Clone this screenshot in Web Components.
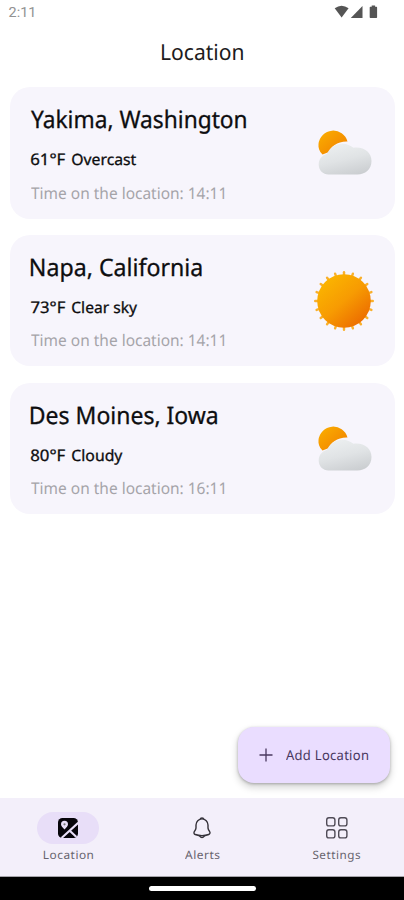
<!DOCTYPE html>
<html lang="en"><head><meta charset="utf-8"><title>Location</title>
<style>html,body{margin:0;background:#fff;overflow:hidden}body{width:404px;height:900px}</style></head><body>
<weather-app></weather-app>
<script>
const FONT='"Noto Sans","Open Sans",sans-serif';
const ctx=document.createElement('canvas').getContext('2d');
// A line of text whose ink spans exactly the requested width.
class FitText extends HTMLElement{
  connectedCallback(){
    const w=+this.getAttribute('w'),s=+this.getAttribute('size'),lh=+this.getAttribute('lh'),ls=+(this.getAttribute('ls')||0);
    const font=this.getAttribute('font')||FONT, t=this.textContent;
    const r=this.attachShadow({mode:'open'});
    // Measured large, so that whole-pixel rounding does not matter.
    ctx.font=`${s*20}px ${font}`;ctx.letterSpacing=ls*20+'px';
    const m=ctx.measureText(t),left=m.actualBoundingBoxLeft/20,ink=left+m.actualBoundingBoxRight/20,k=w/ink;
    r.innerHTML=`<style>:host{display:block;flex:none;width:${w}px;height:${lh}px}
    span{display:inline-block;white-space:nowrap;font:${s}px/${lh}px ${font};letter-spacing:${ls}px;text-rendering:geometricPrecision;transform-origin:0 0;transform:translateX(${left*k}px) scaleX(${k});-webkit-text-stroke:${this.getAttribute('stroke')||0}px currentColor}</style><span><slot></slot></span>`;
  }
}
customElements.define('fit-text',FitText);

const CLOUD=`<svg width="60" height="60" viewBox="314 121 60 60"><defs><linearGradient id="s" x1="0" y1="0" x2="1" y2="1"><stop stop-color="#fbb000"/><stop offset="1" stop-color="#f07d00"/></linearGradient><linearGradient id="c" x1=".3" y1="0" x2=".7" y2="1"><stop stop-color="#eceff0"/><stop offset=".5" stop-color="#e0e3e5"/><stop offset="1" stop-color="#cbced1"/></linearGradient></defs>
<path d="M322.500 155.500C319 152 318.200 148.500 318.500 145A14.800 14.800 0 0 1 347.500 142.500C338 142 330 148 329 153Z" fill="url(#s)"/>
<path d="M328.500 175.500C323 175.500 318.700 171.200 318.700 165.500C318.700 160 322 156.500 327 154.800C330 148.500 335.500 144.700 342.500 144.700C347 144.700 350.500 146.500 353.500 148.800C364 147.500 371.500 153.500 371.500 162C371.500 170.500 365 175.500 357.500 175.500Z" fill="url(#c)"/></svg>`;
const rays=Array.from({length:20},(_,i)=>`<path d="M30 1.200V5" transform="rotate(${i*18} 30 30)"/>`).join('');
const SUN=`<svg width="60" height="60" viewBox="0 0 60 60"><defs><linearGradient id="s" x1=".15" y1=".1" x2=".85" y2=".9"><stop stop-color="#fbb400"/><stop offset=".5" stop-color="#f79b02"/><stop offset="1" stop-color="#ec6c00"/></linearGradient></defs><g stroke="#f9b02c" stroke-width="2.400" stroke-linecap="round">${rays}</g><circle cx="30" cy="30" r="26.800" fill="url(#s)"/></svg>`;

customElements.define('status-bar',class extends HTMLElement{connectedCallback(){
  this.attachShadow({mode:'open'}).innerHTML=`<style>:host{display:flex;justify-content:space-between;height:26px;box-sizing:border-box;padding:3px 26px 0 9px;color:#929292}svg{display:block}</style>
  <fit-text w="24.500" size="14" lh="20" font="Roboto,sans-serif">2:11</fit-text>
  <svg width="44" height="18" viewBox="334 3 44 18" fill="#555"><path d="M334.700 8.300Q341.600 3 348.600 8.300L341.600 17.500Z"/><path d="M362.500 6V18H350.800Z"/><path d="M371.700 5.500h3.400v1.300h1.400q.6 0 .6.700v9.800q0 .7-.7.700h-6q-.7 0-.7-.7V7.500q0-.7.6-.7h1.400Z"/></svg>`}});

customElements.define('app-header',class extends HTMLElement{connectedCallback(){
  this.attachShadow({mode:'open'}).innerHTML=`<style>:host{display:flex;justify-content:center;height:61px;box-sizing:border-box;padding:11px 0 0 1px;color:#1d1b20}</style><fit-text w="81" size="22" lh="30">${this.textContent}</fit-text>`;
}});

customElements.define('location-card',class extends HTMLElement{connectedCallback(){
  const a=n=>this.getAttribute(n);
  this.attachShadow({mode:'open'}).innerHTML=`<style>:host{display:flex;justify-content:space-between;align-items:flex-start;box-sizing:border-box;height:131.500px;border-radius:20px;background:#f7f5fc;padding:17px 21px 0 20.500px;color:#0d0d0f}
  .row{display:flex;gap:7.500px;margin:11px 0 9.500px}.time{color:#a5a4a9}.icon{padding-top:${a('icon')==='sun'?19:16}px}svg{display:block}</style>
  <div><fit-text w="${a('nw')}" size="24" lh="32" stroke=".3">${a('name')}</fit-text>
  <div class="row"><fit-text w="34" size="16" lh="24" stroke=".3">${a('temp')}</fit-text><fit-text w="${a('sw')}" size="15.500" lh="24" stroke=".3">${a('sky')}</fit-text></div>
  <fit-text class="time" w="193" size="16" lh="24">Time on the location: ${a('time')}</fit-text></div><div class="icon">${a('icon')==='sun'?SUN:CLOUD}</div>`}});

customElements.define('add-button',class extends HTMLElement{connectedCallback(){
  this.attachShadow({mode:'open'}).innerHTML=`<style>:host{display:flex;align-items:center;box-sizing:border-box;width:152px;height:55.500px;border-radius:16px;background:#eaddff;padding-left:21px;gap:12.500px;color:#49385f;box-shadow:0 1px 3px rgba(0,0,0,.26),0 4px 7px 1px rgba(0,0,0,.15)}</style>
  <svg width="14" height="14" fill="none" stroke="currentColor" stroke-width="1.300"><path d="M7 .5v13M.5 7h13"/></svg><fit-text w="82" size="13.500" lh="20" ls=".3">${this.textContent}</fit-text>`}});

const ICONS={
 map:`<defs><clipPath id="m"><rect x="2" y="2" width="20" height="20" rx="4.500"/></clipPath></defs><g clip-path="url(#m)"><rect x="2" y="2" width="20" height="20" fill="#07050b"/><path d="M22.500 6.500L5 22.500M13.500 14.500L22 22.500" stroke="#e8def8" stroke-width="2.100"/><path d="M8.500 13.500C6.500 11.500 5 10.200 5 8.300A3.500 3.500 0 0 1 12 8.300C12 10.200 10.500 11.500 8.500 13.500Z" fill="#e8def8"/><circle cx="8.500" cy="8.300" r="1.100" fill="#777"/></g>`,
 bell:`<g fill="none" stroke="#35323a" stroke-width="1.400" stroke-linecap="round" stroke-linejoin="round"><path d="M12 2.900C8.700 2.900 6 5.600 6 8.900V11.800C6 12.400 5.700 13.300 5.400 13.800L4.300 15.700C3.600 16.900 4.100 18.100 5.300 18.500C9.700 20 14.300 20 18.700 18.500C19.900 18.100 20.400 16.800 19.700 15.700L18.600 13.800C18.300 13.300 18 12.400 18 11.800V8.900C18 5.600 15.300 2.900 12 2.900Z"/><path d="M10.600 2.400Q12 1.700 13.400 2.400M9.500 19.800Q12 23.200 14.500 19.800"/></g>`,
 grid:`<g fill="none" stroke="#4f4b56" stroke-width="1.400"><rect x="1.700" y="1.700" width="8.200" height="8.200" rx="2.200"/><rect x="13.700" y="1.700" width="8.200" height="8.200" rx="2.200"/><rect x="1.700" y="13.700" width="8.200" height="8.200" rx="2.200"/><rect x="13.700" y="13.700" width="8.200" height="8.200" rx="2.200"/></g>`};
customElements.define('nav-item',class extends HTMLElement{connectedCallback(){
  this.attachShadow({mode:'open'}).innerHTML=`<style>:host{flex:1;display:flex;flex-direction:column;align-items:center;padding-top:14px;color:#67636d}
  .pill{width:62px;height:32px;border-radius:16px;display:grid;place-items:center;margin-bottom:1px}:host([active]) .pill{background:#e8def8}svg{display:block}</style>
  <div class="pill"><svg width="24" height="24" viewBox="0 0 24 24">${ICONS[this.getAttribute('icon')]}</svg></div><fit-text w="${this.getAttribute('w')}" size="11.500" lh="18" ls=".5">${this.textContent}</fit-text>`}});

customElements.define('bottom-nav',class extends HTMLElement{connectedCallback(){
  this.attachShadow({mode:'open'}).innerHTML=`<style>:host{display:flex;box-sizing:border-box;height:79px;background:#f3effa;border-bottom:1px solid #a6a4aa;padding-left:1px}</style><slot></slot>`}});
customElements.define('gesture-bar',class extends HTMLElement{connectedCallback(){
  this.attachShadow({mode:'open'}).innerHTML=`<style>:host{display:flex;justify-content:center;align-items:center;height:23px;background:#000}i{width:107px;height:4.500px;border-radius:3px;background:#fff}</style><i></i>`}});

customElements.define('weather-app',class extends HTMLElement{connectedCallback(){
  this.attachShadow({mode:'open'}).innerHTML=`<style>:host{display:flex;flex-direction:column;width:404px;height:900px;background:#fff}
  main{flex:1;display:flex;flex-direction:column;gap:16.250px;padding:0 9.500px 0 10px;min-height:0}add-button{margin:auto 4.500px 15.500px auto}</style>
  <status-bar></status-bar><app-header>Location</app-header>
  <main><location-card name="Yakima, Washington" nw="215" temp="61°F" sky="Overcast" sw="64" time="14:11" icon="cloud"></location-card>
  <location-card name="Napa, California" nw="170.500" temp="73°F" sky="Clear sky" sw="65" time="14:11" icon="sun"></location-card>
  <location-card name="Des Moines, Iowa" nw="186" temp="80°F" sky="Cloudy" sw="50.500" time="16:11" icon="cloud"></location-card>
  <add-button>Add Location</add-button></main>
  <bottom-nav><nav-item active icon="map" w="49">Location</nav-item><nav-item icon="bell" w="34.500">Alerts</nav-item><nav-item icon="grid" w="47">Settings</nav-item></bottom-nav><gesture-bar></gesture-bar>`}});
</script></body></html>
